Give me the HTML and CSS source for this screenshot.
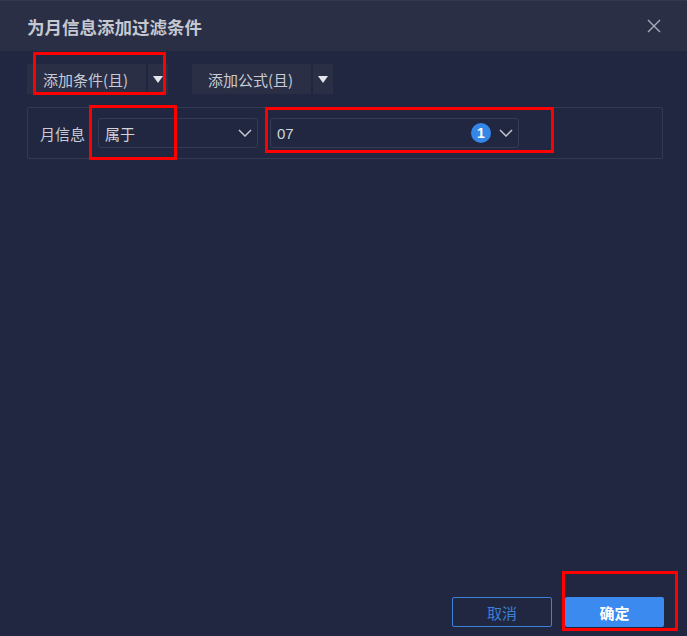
FILE: index.html
```html
<!DOCTYPE html>
<html lang="zh">
<head>
  <meta charset="UTF-8">
  <title>为月信息添加过滤条件</title>
  <link rel="stylesheet" href="styles.css">
</head>
<body>
  <div class="dialog">
    <div class="dialog-header">
      <h2 class="dialog-title">为月信息添加过滤条件</h2>
      <span class="close-btn">
        <svg width="14" height="14" viewBox="0 0 14 14"><path d="M1 1L13 13M13 1L1 13" stroke="#a9adbb" stroke-width="1.4" fill="none"/></svg>
      </span>
    </div>

    <div class="dialog-body">
      <div class="toolbar">
        <div class="split-btn">
          <span class="split-main">添加条件(且)</span>
          <span class="split-arrow"></span>
        </div>
        <div class="split-btn">
          <span class="split-main">添加公式(且)</span>
          <span class="split-arrow"></span>
        </div>
      </div>

      <div class="condition">
        <span class="cond-label">月信息</span>
        <div class="select select-op">
          <span>属于</span>
          <svg class="chevron" width="14" height="8" viewBox="0 0 14 8"><path d="M1 1L7 7L13 1" stroke="#c3c6cf" stroke-width="1.5" fill="none"/></svg>
        </div>
        <div class="select select-val">
          <span>07</span>
          <span class="count">1</span>
          <svg class="chevron" width="14" height="8" viewBox="0 0 14 8"><path d="M1 1L7 7L13 1" stroke="#c3c6cf" stroke-width="1.5" fill="none"/></svg>
        </div>
      </div>
    </div>

    <div class="dialog-footer">
      <button class="btn btn-cancel">取消</button>
      <button class="btn btn-ok">确定</button>
    </div>

    <!-- review marks -->
    <div class="mark mark-1"></div>
    <div class="mark mark-2"></div>
    <div class="mark mark-3"></div>
    <div class="mark mark-4"></div>
  </div>
</body>
</html>
```

FILE: styles.css
```css
body {
  margin: 0;
  font-family: "Noto Sans CJK SC", "Liberation Sans", sans-serif;
  font-size: 15px;
  color: #c8cbd3;
  background: #212740;
}
.dialog {
  position: relative;
  display: flex;
  flex-direction: column;
  height: 636px;
  background: #212740;
  overflow: hidden;
}
.dialog-header {
  display: flex;
  align-items: center;
  justify-content: space-between;
  height: 51px;
  padding: 0 26px 0 27px;
  background: #2a2f46;
  border-top: 1px solid #32374d;
  box-sizing: border-box;
}
.dialog-title {
  margin: 0;
  font-size: 17.5px;
  font-weight: bold;
  color: #c5c8d1;
}
.close-btn {
  display: flex;
}
.dialog-body {
  flex: 1;
  padding: 13px 24px 0 27px;
}
.toolbar {
  display: flex;
  gap: 24px;
}
.split-btn {
  display: flex;
  gap: 2px;
  height: 30px;
}
.split-main {
  display: flex;
  align-items: center;
  width: 119px;
  padding-left: 16px;
  box-sizing: border-box;
  background: #2a2f46;
  color: #c8cbd3;
}
.split-arrow {
  position: relative;
  width: 20px;
  background: #2a2f46;
}
.split-arrow::after {
  content: "";
  position: absolute;
  left: 5px;
  top: 12px;
  border-left: 5px solid transparent;
  border-right: 5px solid transparent;
  border-top: 7px solid #e4e6ec;
}
.condition {
  display: flex;
  align-items: center;
  height: 52px;
  margin-top: 13px;
  padding: 0 12px;
  border: 1px solid #343a51;
  border-radius: 2px;
  box-sizing: border-box;
}
.cond-label {
  margin-right: 13px;
  color: #c8cbd3;
}
.select {
  display: flex;
  align-items: center;
  height: 30px;
  padding: 0 5px 0 6px;
  border: 1px solid #353b52;
  border-radius: 3px;
  box-sizing: border-box;
  color: #d2d4db;
}
.select span:first-child {
  flex: 1;
}
.select-op {
  width: 160px;
}
.select-val {
  width: 249px;
  margin-left: 12px;
  font-family: "Liberation Sans", "Noto Sans CJK SC", sans-serif;
  font-size: 15px;
}
.count {
  display: flex;
  align-items: center;
  justify-content: center;
  width: 20px;
  height: 20px;
  margin-right: 8px;
  border-radius: 50%;
  background: #3486e8;
  color: #fff;
  font-size: 14px;
  font-weight: bold;
}
.dialog-footer {
  display: flex;
  justify-content: flex-end;
  gap: 13px;
  padding: 0 23px 9px 0;
}
.btn {
  width: 100px;
  height: 30px;
  font-family: inherit;
  font-size: 15px;
  border-radius: 2px;
  box-sizing: border-box;
}
.btn-cancel {
  background: transparent;
  border: 1px solid #3b82dc;
  color: #3b7fd6;
}
.btn-ok {
  width: 99px;
  background: #3a8af0;
  border: none;
  color: #fff;
  font-weight: bold;
}
.mark {
  position: absolute;
  border: 3px solid #ff0000;
  box-sizing: border-box;
}
.mark-1 { left: 33px; top: 52px; width: 133px; height: 43px; }
.mark-2 { left: 89px; top: 105px; width: 88px; height: 55px; }
.mark-3 { left: 265px; top: 107px; width: 289px; height: 46px; }
.mark-4 { left: 562px; top: 571px; width: 116px; height: 60px; }
```
